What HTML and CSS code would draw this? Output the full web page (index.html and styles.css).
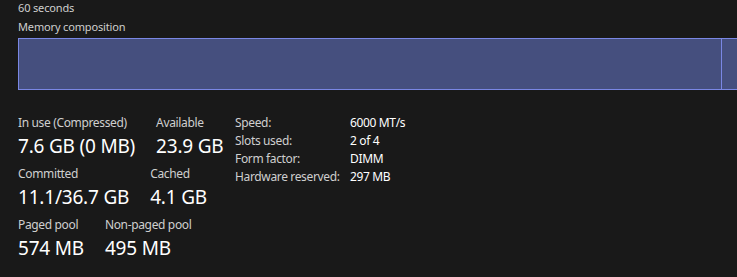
FILE: index.html
```html
<!DOCTYPE html>
<html lang="en">
<head>
    <meta charset="UTF-8">
    <title>Memory</title>
    <link rel="stylesheet" href="styles.css">
</head>
<body>

<div class="page">
    <div class="caption">60 seconds</div>
    <div class="caption title">Memory composition</div>

    <div class="composition">
        <div class="segment used"></div>
        <div class="segment rest"></div>
    </div>

    <div class="details">
        <div class="stats">
            <div class="row">
                <div class="stat">
                    <div class="label">In use (Compressed)</div>
                    <div class="value">7.6 GB (0 MB)</div>
                </div>
                <div class="stat">
                    <div class="label">Available</div>
                    <div class="value">23.9 GB</div>
                </div>
            </div>
            <div class="row">
                <div class="stat">
                    <div class="label">Committed</div>
                    <div class="value">11.1/36.7 GB</div>
                </div>
                <div class="stat">
                    <div class="label">Cached</div>
                    <div class="value">4.1 GB</div>
                </div>
            </div>
            <div class="row">
                <div class="stat">
                    <div class="label">Paged pool</div>
                    <div class="value">574 MB</div>
                </div>
                <div class="stat">
                    <div class="label">Non-paged pool</div>
                    <div class="value">495 MB</div>
                </div>
            </div>
        </div>

        <div class="specs">
            <div class="key">Speed:</div><div class="val">6000 MT/s</div>
            <div class="key">Slots used:</div><div class="val">2 of 4</div>
            <div class="key">Form factor:</div><div class="val">DIMM</div>
            <div class="key">Hardware reserved:</div><div class="val">297 MB</div>
        </div>
    </div>
</div>

</body>
</html>
```

FILE: styles.css
```css
body {
    margin: 0;
    background: #191919;
    color: #fff;
    font-family: "Noto Sans", "Open Sans", sans-serif;
    overflow: hidden;
}
.page {
    padding-left: 18px;
}
.caption {
    font-size: 11px;
    line-height: 16px;
    letter-spacing: -0.15px;
    color: #cfcfcf;
}
.title {
    margin-top: 3px;
}
.composition {
    display: flex;
    margin-top: 3px;
    height: 52px;
    box-sizing: border-box;
    border: 1px solid #7a87e4;
    border-right: none;
    background: #454f7e;
}
.segment.used {
    width: 702px;
    border-right: 1px solid #7a87e4;
}
.segment.rest {
    flex: 1;
}
.details {
    display: flex;
    gap: 13px;
    margin-top: 25px;
}
.stats {
    flex: 0 0 204px;
    min-width: 0;
}
.row {
    display: flex;
    gap: 21px;
    margin-bottom: 7px;
}
.label {
    font-size: 12px;
    line-height: 16px;
    letter-spacing: -0.35px;
    color: #cfcfcf;
    white-space: nowrap;
}
.value {
    margin-top: 2px;
    font-size: 19px;
    line-height: 26px;
    letter-spacing: -0.2px;
    white-space: nowrap;
}
.specs {
    display: grid;
    grid-template-columns: 115px auto;
    grid-auto-rows: 18px;
    align-content: start;
    margin-top: -1px;
    font-size: 12px;
    line-height: 18px;
    letter-spacing: -0.35px;
    white-space: nowrap;
}
.key {
    color: #cfcfcf;
}
```
